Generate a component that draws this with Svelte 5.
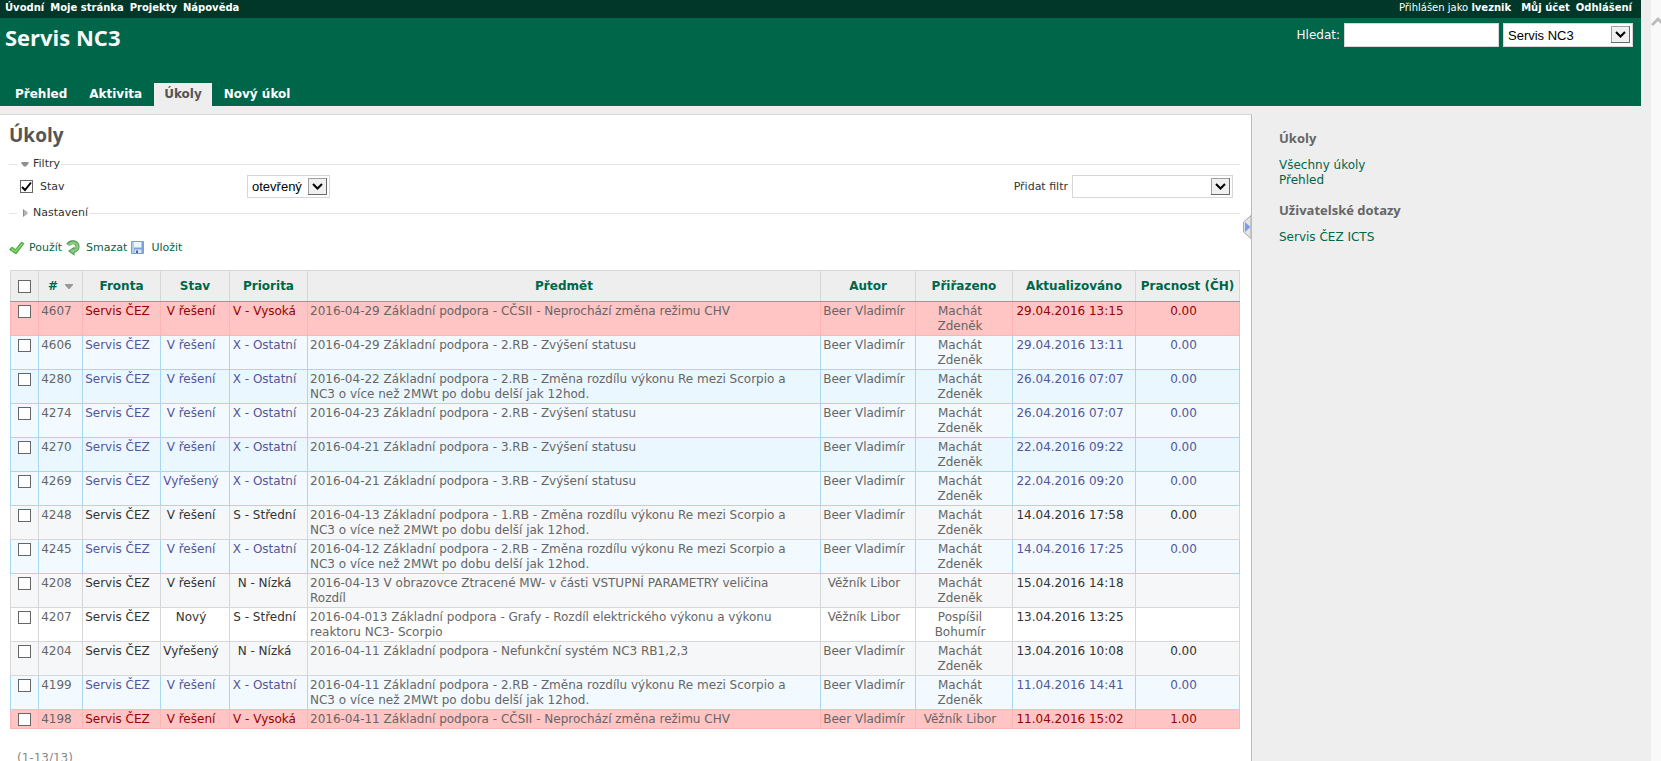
<script lang="ts">
  type Issue = {
    id: number;
    status: string;
    priority: string;
    subject: string;
    author: string;
    assigned: string;
    updated: string;
    hours: string;
  };

  const MAIN_MENU = ['Přehled', 'Aktivita', 'Úkoly', 'Nový úkol'];
  const COLUMNS = ['Fronta', 'Stav', 'Priorita', 'Předmět', 'Autor', 'Přiřazeno', 'Aktualizováno', 'Pracnost (ČH)'];

  const PRIORITY_CLASS: Record<string, string> = {
    'V - Vysoká': 'high',
    'X - Ostatní': 'lowest',
  };

  const issues: Issue[] = [
    { id: 4607, status: 'V řešení', priority: 'V - Vysoká', subject: '2016-04-29 Základní podpora - CČSII - Neprochází změna režimu CHV', author: 'Beer Vladimír', assigned: 'Machát Zdeněk', updated: '29.04.2016 13:15', hours: '0.00' },
    { id: 4606, status: 'V řešení', priority: 'X - Ostatní', subject: '2016-04-29 Základní podpora - 2.RB - Zvýšení statusu', author: 'Beer Vladimír', assigned: 'Machát Zdeněk', updated: '29.04.2016 13:11', hours: '0.00' },
    { id: 4280, status: 'V řešení', priority: 'X - Ostatní', subject: '2016-04-22 Základní podpora - 2.RB - Změna rozdílu výkonu Re mezi Scorpio a NC3 o více než 2MWt po dobu delší jak 12hod.', author: 'Beer Vladimír', assigned: 'Machát Zdeněk', updated: '26.04.2016 07:07', hours: '0.00' },
    { id: 4274, status: 'V řešení', priority: 'X - Ostatní', subject: '2016-04-23 Základní podpora - 2.RB - Zvýšení statusu', author: 'Beer Vladimír', assigned: 'Machát Zdeněk', updated: '26.04.2016 07:07', hours: '0.00' },
    { id: 4270, status: 'V řešení', priority: 'X - Ostatní', subject: '2016-04-21 Základní podpora - 3.RB - Zvýšení statusu', author: 'Beer Vladimír', assigned: 'Machát Zdeněk', updated: '22.04.2016 09:22', hours: '0.00' },
    { id: 4269, status: 'Vyřešený', priority: 'X - Ostatní', subject: '2016-04-21 Základní podpora - 3.RB - Zvýšení statusu', author: 'Beer Vladimír', assigned: 'Machát Zdeněk', updated: '22.04.2016 09:20', hours: '0.00' },
    { id: 4248, status: 'V řešení', priority: 'S - Střední', subject: '2016-04-13 Základní podpora - 1.RB - Změna rozdílu výkonu Re mezi Scorpio a NC3 o více než 2MWt po dobu delší jak 12hod.', author: 'Beer Vladimír', assigned: 'Machát Zdeněk', updated: '14.04.2016 17:58', hours: '0.00' },
    { id: 4245, status: 'V řešení', priority: 'X - Ostatní', subject: '2016-04-12 Základní podpora - 2.RB - Změna rozdílu výkonu Re mezi Scorpio a NC3 o více než 2MWt po dobu delší jak 12hod.', author: 'Beer Vladimír', assigned: 'Machát Zdeněk', updated: '14.04.2016 17:25', hours: '0.00' },
    { id: 4208, status: 'V řešení', priority: 'N - Nízká', subject: '2016-04-13 V obrazovce Ztracené MW- v části VSTUPNÍ PARAMETRY veličina Rozdíl', author: 'Věžník Libor', assigned: 'Machát Zdeněk', updated: '15.04.2016 14:18', hours: '' },
    { id: 4207, status: 'Nový', priority: 'S - Střední', subject: '2016-04-013 Základní podpora - Grafy - Rozdíl elektrického výkonu a výkonu reaktoru NC3- Scorpio', author: 'Věžník Libor', assigned: 'Pospíšil Bohumír', updated: '13.04.2016 13:25', hours: '' },
    { id: 4204, status: 'Vyřešený', priority: 'N - Nízká', subject: '2016-04-11 Základní podpora - Nefunkční systém NC3 RB1,2,3', author: 'Beer Vladimír', assigned: 'Machát Zdeněk', updated: '13.04.2016 10:08', hours: '0.00' },
    { id: 4199, status: 'V řešení', priority: 'X - Ostatní', subject: '2016-04-11 Základní podpora - 2.RB - Změna rozdílu výkonu Re mezi Scorpio a NC3 o více než 2MWt po dobu delší jak 12hod.', author: 'Beer Vladimír', assigned: 'Machát Zdeněk', updated: '11.04.2016 14:41', hours: '0.00' },
    { id: 4198, status: 'V řešení', priority: 'V - Vysoká', subject: '2016-04-11 Základní podpora - CČSII - Neprochází změna režimu CHV', author: 'Beer Vladimír', assigned: 'Věžník Libor', updated: '11.04.2016 15:02', hours: '1.00' },
  ];

  let selected: number[] = [];
  let statusFilter = true;

  function toggleAll() {
    selected = selected.length === issues.length ? [] : issues.map((i) => i.id);
  }
</script>

{#snippet arrow()}
  <svg class="drop" width="19" height="17" viewBox="0 0 19 17" aria-hidden="true">
    <rect x="0.5" y="0.5" width="18" height="16" fill="#f0f0f0" stroke="#a0a0a0" />
    <path d="M0 16.5h18.5V0" fill="none" stroke="#696969" />
    <path d="M5 6l4.500 4.500L14 6" fill="none" stroke="#000" stroke-width="2" />
  </svg>
{/snippet}

<div class="window">
  <div class="page">
    <div class="top-menu">
      <nav>
        <a href="#home">Úvodní</a>
        <a href="#my">Moje stránka</a>
        <a href="#projects">Projekty</a>
        <a href="#help">Nápověda</a>
      </nav>
      <div class="account">
        <span>Přihlášen jako <a href="#user">lveznik</a></span>
        <a href="#account">Můj účet</a>
        <a href="#logout">Odhlášení</a>
      </div>
    </div>

    <header>
      <div class="header-row">
        <h1>Servis NC3</h1>
        <form class="quick-search" on:submit|preventDefault>
          <label for="q">Hledat:</label>
          <input id="q" type="text" />
          <span class="select project">
            <select aria-label="Projekt"><option>Servis NC3</option></select>
            {@render arrow()}
          </span>
        </form>
      </div>
      <nav class="main-menu">
        {#each MAIN_MENU as item}
          <a href="#menu" class:selected={item === 'Úkoly'}>{item}</a>
        {/each}
      </nav>
    </header>

    <div class="main">
      <main>
        <h2>Úkoly</h2>

        <fieldset>
          <legend>
            <svg width="8" height="8" viewBox="0 0 8 8"><path d="M0.500 2h7v1.500L5 6.500H3L0.500 3.500z" fill="#8f8f8f" /></svg>
            Filtry
          </legend>
          <div class="filters">
            <label class="filter-name">
              <input type="checkbox" bind:checked={statusFilter} />
              Stav
            </label>
            <span class="select status">
              <select aria-label="Stav"><option>otevřený</option></select>
              {@render arrow()}
            </span>
            <div class="add-filter">
              <label for="add">Přidat filtr</label>
              <span class="select add">
                <select id="add"><option></option></select>
                {@render arrow()}
              </span>
            </div>
          </div>
        </fieldset>

        <fieldset class="collapsed">
          <legend>
            <svg width="8" height="8" viewBox="0 0 8 8"><path d="M2 0.500v7h1L6.500 5V3L3 0.500z" fill="#b4b4b4" /><path d="M2.500 0.500v7" stroke="#8a8a8a" /></svg>
            Nastavení
          </legend>
        </fieldset>

        <div class="buttons">
          <a href="#apply">
            <svg width="16" height="16" viewBox="0 0 16 16">
              <path d="M0.500 9.500L3 7l3.500 2.500L12.500 2l2.500 1.500L7 14z" fill="#5fbf4a" stroke="#3f9c37" stroke-width="0.8" />
              <path d="M2.500 9l4 2.500L13.500 3.500" fill="none" stroke="#a5e58c" stroke-width="0.9" />
            </svg>
            Použít
          </a>
          <a href="#clear">
            <svg width="16" height="16" viewBox="0 0 16 16">
              <path d="M2 5C4 1.800 9 1 11 4.500c1.500 3-.2 6-4 6.500" fill="none" stroke="#4b9a4b" stroke-width="4" />
              <path d="M8.500 6.500v9.300L2 11z" fill="#4b9a4b" />
              <path d="M2.600 5C4.500 2.300 9 1.500 11 4.500c1.500 3-.2 6-4 6.500" fill="none" stroke="#8fcb87" stroke-width="2.200" />
              <path d="M7.600 8.500v5.300L3.600 11z" fill="#8fcb87" />
            </svg>
            Smazat
          </a>
          <a href="#save">
            <svg width="16" height="16" viewBox="0 0 16 16">
              <path d="M0.500 1.500h12v12h-12z" fill="#7ba3dc" stroke="#7f9fcf" />
              <path d="M1 2h2v11H1z" fill="#b3cdf0" />
              <path d="M3 2h7.500v5.500H3z" fill="#eef4fc" />
              <path d="M3.500 9.500h7V13h-7z" fill="#dfe7f2" />
              <path d="M5 10.500h2V13H5z" fill="#3d66a6" />
            </svg>
            Uložit
          </a>
        </div>

        <table>
          <colgroup>
            <col class="c-check" />
            <col class="c-id" />
            <col class="c-queue" />
            <col class="c-status" />
            <col class="c-priority" />
            <col />
            <col class="c-author" />
            <col class="c-assigned" />
            <col class="c-updated" />
            <col class="c-hours" />
          </colgroup>
          <thead>
            <tr>
              <th>
                <input type="checkbox" aria-label="Vybrat vše" checked={selected.length === issues.length} on:change={toggleAll} />
              </th>
              <th>
                <a href="#sort" class="sorted">
                  #
                  <svg width="8" height="6" viewBox="0 0 8 6"><path d="M0 0h8v1L4.500 5h-1L0 1z" fill="#999" /></svg>
                </a>
              </th>
              {#each COLUMNS as column}
                <th><a href="#sort">{column}</a></th>
              {/each}
            </tr>
          </thead>
          <tbody>
            {#each issues as issue (issue.id)}
              <tr class={PRIORITY_CLASS[issue.priority] ?? ''}>
                <td class="check">
                  <input type="checkbox" aria-label="Úkol {issue.id}" value={issue.id} bind:group={selected} />
                </td>
                <td><a href="#issue-{issue.id}">{issue.id}</a></td>
                <td>Servis ČEZ</td>
                <td>{issue.status}</td>
                <td>{issue.priority}</td>
                <td class="subject"><a href="#issue-{issue.id}">{issue.subject}</a></td>
                <td><a href="#user">{issue.author}</a></td>
                <td class="assigned"><a href="#user">{issue.assigned}</a></td>
                <td>{issue.updated}</td>
                <td>{issue.hours}</td>
              </tr>
            {/each}
          </tbody>
        </table>

        <p class="pagination">(1-13/13)</p>

        <button class="hide-sidebar" type="button" aria-label="Skrýt panel">
          <svg width="8" height="24" viewBox="0 0 8 24">
            <path d="M8 0.500L0.500 7v10L8 23.500z" fill="#e4e4e4" stroke="#a8a8a8" />
            <path d="M2 7l5.500 5L2 17z" fill="#7d9df0" />
          </svg>
        </button>
      </main>

      <aside>
        <h3>Úkoly</h3>
        <a href="#all">Všechny úkoly</a>
        <a href="#summary">Přehled</a>
        <h3>Uživatelské dotazy</h3>
        <a href="#query">Servis ČEZ ICTS</a>
      </aside>
    </div>
  </div>

  <div class="scrollbar">
    <svg width="14" height="10" viewBox="0 0 14 10"><path d="M1 9l6-6 6 6" fill="none" stroke="#bcbcbc" stroke-width="3" /></svg>
  </div>
</div>

<style>
  :global(body) {
    margin: 0;
    background: #eee;
  }

  .window {
    display: flex;
    height: 100vh;
    overflow: hidden;
    font: 12px/15px Verdana, 'DejaVu Sans', sans-serif;
    color: #333;
  }

  .page {
    flex: 1;
    min-width: 0;
    display: flex;
    flex-direction: column;
    margin-right: 10px;
    overflow-y: auto;
    scrollbar-width: none;
  }

  .scrollbar {
    width: 10px;
    padding-top: 15px;
    box-sizing: border-box;
    background: #f9f9f9;
    overflow: hidden;
  }

  a {
    color: #006649;
    text-decoration: none;
  }

  a:hover {
    text-decoration: underline;
  }

  svg {
    flex: none;
  }

  .top-menu {
    display: flex;
    justify-content: space-between;
    padding: 0 9px 3px 5px;
    background: #003729;
    color: #fff;
    font-size: 10px;
  }

  .top-menu nav,
  .account {
    display: flex;
    gap: 6px;
  }

  .account span {
    margin-right: 4px;
  }

  .top-menu a {
    color: #fff;
    font-weight: bold;
  }

  header {
    background: #006649;
    color: #f8f8f8;
  }

  .header-row {
    display: flex;
    justify-content: space-between;
    align-items: flex-start;
    height: 60px;
    padding: 5px 8px 0 5px;
  }

  h1,
  h2,
  h3 {
    margin: 0;
    font-family: 'Trebuchet MS', 'Open Sans', sans-serif;
    font-weight: bold;
  }

  h1 {
    font-size: 22px;
    line-height: 28px;
  }

  .quick-search {
    display: flex;
    align-items: center;
    gap: 4px;
  }

  .quick-search input {
    width: 155px;
    height: 24px;
    box-sizing: border-box;
    border: 1px solid #d7d7d7;
    background: #fff;
  }

  .select {
    position: relative;
    display: inline-block;
  }

  .select select {
    display: block;
    width: 100%;
    height: 23px;
    padding: 0 22px 0 4px;
    border: 1px solid #d7d7d7;
    border-radius: 0;
    background: #fff;
    color: #000;
    font: 13px 'Liberation Sans', Arial, sans-serif;
    appearance: none;
  }

  .drop {
    position: absolute;
    top: 3px;
    right: 3px;
    pointer-events: none;
  }

  .project {
    width: 130px;
  }

  .project select {
    height: 24px;
  }

  .status {
    width: 83px;
  }

  .add {
    width: 161px;
  }

  .main-menu {
    display: flex;
    gap: 2px;
    padding-left: 5px;
  }

  .main-menu a {
    padding: 4px 10px;
    color: #fff;
    font-weight: bold;
  }

  .main-menu .selected {
    background: #eee;
    color: #555;
  }

  .main {
    flex: 1 0 auto;
    display: flex;
    padding-top: 8px;
  }

  main {
    position: relative;
    flex: 1;
    min-width: 0;
    padding: 5px 11px 10px 9px;
    border-top: 1px solid #d7d7d7;
    border-right: 1px solid #bbb;
    background: #fff;
  }

  h2 {
    color: #555;
    font-size: 19px;
    line-height: 30px;
  }

  h3 {
    color: #666;
    font-size: 13px;
    line-height: 16px;
  }

  aside {
    box-sizing: border-box;
    width: 389px;
    padding: 16px 27px;
  }

  aside a {
    display: block;
  }

  aside h3 {
    margin-bottom: 12px;
  }

  aside a + h3 {
    margin-top: 14px;
  }

  fieldset {
    margin: 6px 0 0;
    padding: 0 7px;
    border: 0;
    border-top: 1px solid #e4e4e4;
    font-size: 11px;
  }

  fieldset.collapsed {
    margin-top: 0;
  }

  legend {
    display: flex;
    align-items: center;
    gap: 4px;
    margin-left: 1px;
    padding: 0 1px 0 4px;
    line-height: 16px;
  }

  .filters {
    display: flex;
    align-items: center;
    height: 28px;
    padding-bottom: 5px;
  }

  .filter-name {
    display: flex;
    align-items: center;
    gap: 7px;
    width: 227px;
    padding-left: 4px;
  }

  .add-filter {
    display: flex;
    align-items: center;
    gap: 4px;
    margin-left: auto;
  }

  input[type='checkbox'] {
    display: block;
    width: 13px;
    height: 13px;
    margin: 0;
    border: 1px solid #666;
    background: #fff;
    appearance: none;
  }

  input[type='checkbox']:checked {
    background: #fff url("data:image/svg+xml,%3Csvg xmlns='http://www.w3.org/2000/svg' viewBox='0 0 11 11'%3E%3Cpath d='M1 6l3 3L10 1.500' fill='none' stroke='%23000' stroke-width='2'/%3E%3C/svg%3E");
  }

  .buttons {
    display: flex;
    gap: 4px;
    margin-top: 19px;
    font-size: 11px;
    line-height: 16px;
  }

  .buttons a {
    display: flex;
    gap: 4px;
  }

  table {
    width: calc(100% - 1px);
    margin: 14px 0 0 1px;
    border-collapse: collapse;
    table-layout: fixed;
  }

  .c-check {
    width: 28px;
  }

  .c-id {
    width: 44px;
  }

  .c-queue,
  .c-priority {
    width: 78px;
  }

  .c-status {
    width: 69px;
  }

  .c-author {
    width: 95px;
  }

  .c-assigned {
    width: 97px;
  }

  .c-updated {
    width: 123px;
  }

  .c-hours {
    width: 104px;
  }

  th {
    padding: 8px 0 7px;
    border: 1px solid #d7d7d7;
    border-bottom-color: #999;
    background: #eee;
    white-space: nowrap;
  }

  th input[type='checkbox'] {
    margin: 0 auto;
  }

  .sorted {
    display: flex;
    align-items: center;
    justify-content: center;
    gap: 7px;
  }

  td {
    padding: 2px 10px 1px 2px;
    border: 1px solid #d7d7d7;
    text-align: center;
    vertical-align: top;
    white-space: nowrap;
  }

  td a {
    color: #666;
  }

  td.check {
    padding-right: 2px;
  }

  td.check input {
    margin: 1px auto 0;
  }

  td.subject {
    padding-right: 24px;
    text-align: left;
    white-space: normal;
  }

  td.assigned {
    white-space: normal;
  }

  tbody tr {
    background: #fff;
  }

  tbody tr:nth-child(odd) {
    background: #f6f7f8;
  }

  tbody tr.lowest {
    background: #f2faff;
    color: #559;
  }

  tbody tr.lowest:nth-child(odd) {
    background: #eaf7ff;
  }

  tbody tr.lowest td {
    border-color: #a9d7f1;
  }

  tbody tr.high,
  tbody tr.high:nth-child(odd) {
    background: #ffc4c4;
    color: #900;
  }

  tbody tr.high td {
    border-color: #ffb4b4;
  }

  .pagination {
    margin: 22px 0 0 8px;
    color: #888;
  }

  .hide-sidebar {
    position: absolute;
    top: 100px;
    right: 0;
    padding: 0;
    border: 0;
    background: none;
    line-height: 0;
  }
</style>
